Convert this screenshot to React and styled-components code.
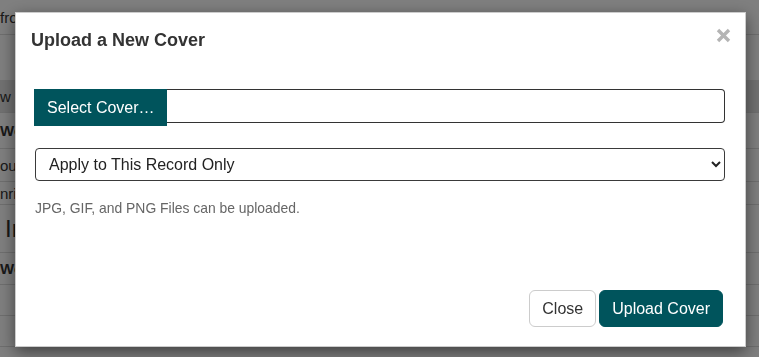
import styled, { createGlobalStyle } from "styled-components";

const GlobalStyle = createGlobalStyle`
  html, body {
    margin: 0;
    padding: 0;
    background: #fff;
    font-family: "Liberation Sans", Arial, sans-serif;
    color: #333;
    overflow: hidden;
  }
`;

const Page = styled.div`
  height: 357px;
  overflow: hidden;
`;

const PageRow = styled.div`
  height: ${(p) => p.$h}px;
  display: flex;
  align-items: center;
  padding-left: ${(p) => p.$indent || 0}px;
  border-bottom: ${(p) => (p.$line ? "1px solid #ddd" : "none")};
  background: ${(p) => p.$bg || "transparent"};
  font-size: ${(p) => p.$size || 15}px;
  font-weight: ${(p) => (p.$bold ? 700 : 400)};
  white-space: nowrap;
  box-sizing: border-box;
`;

const Backdrop = styled.div`
  position: fixed;
  inset: 0;
  background: rgba(0, 0, 0, 0.5);
`;

const Dialog = styled.div`
  margin: 12px 13px 0 15px;
  height: 335px;
  box-sizing: border-box;
  background: #fff;
  border: 1px solid rgba(0, 0, 0, 0.2);
  box-shadow: 0 5px 15px rgba(0, 0, 0, 0.5);
  display: flex;
  flex-direction: column;
`;

const Header = styled.div`
  display: flex;
  justify-content: space-between;
  align-items: flex-start;
  padding: 17px 14px 0 15px;
`;

const Title = styled.h4`
  margin: 0;
  font-size: 18px;
  line-height: 20px;
  font-weight: 700;
  color: #333;
`;

const CloseX = styled.button`
  margin-top: -2px;
  padding: 0;
  border: 0;
  background: none;
  width: 15px;
  height: 15px;
  display: flex;
  cursor: pointer;
`;

const Body = styled.div`
  padding: 39px 20px 0 19px;
  flex: 1;
`;

const InputGroup = styled.div`
  display: flex;
  align-items: flex-start;
  margin-left: -1px;
`;

const PickButton = styled.button`
  height: 37px;
  padding: 0 12px 0 13px;
  border: 0;
  background: #00545c;
  color: #fff;
  font-family: inherit;
  font-size: 16px;
  flex-shrink: 0;
`;

const FileName = styled.div`
  flex: 1;
  height: 34px;
  box-sizing: border-box;
  border: 1px solid #333;
  border-left: 0;
  border-radius: 0 4px 4px 0;
`;

const Select = styled.select`
  display: block;
  width: 100%;
  height: 33px;
  margin-top: 22px;
  padding: 0 8px 0 9px;
  box-sizing: border-box;
  border: 1px solid #3a3a3a;
  border-radius: 4px;
  background: #fff;
  color: #222;
  font-family: inherit;
  font-size: 16px;
  outline: none;
`;

const Help = styled.p`
  margin: 16.5px 0 0;
  font-size: 13.9px;
  line-height: 20px;
  color: #666;
`;

const Footer = styled.div`
  display: flex;
  justify-content: flex-end;
  gap: 3px;
  padding: 0 22px 19px 15px;
`;

const FooterButton = styled.button`
  height: 37px;
  padding: 0 12px;
  border-radius: 6px;
  border: 1px solid ${(p) => (p.$primary ? "#00545c" : "#ccc")};
  background: ${(p) => (p.$primary ? "#00545c" : "#fff")};
  color: ${(p) => (p.$primary ? "#fff" : "#333")};
  font-family: inherit;
  font-size: 16px;
  cursor: pointer;
`;

export default function App() {
  return (
    <>
      <GlobalStyle />
      <Page>
        <PageRow $h={35} $line>from</PageRow>
        <PageRow $h={45} />
        <PageRow $h={33} $bg="#e2e2e2" $line>w</PageRow>
        <PageRow $h={36} $bold $line>Work</PageRow>
        <PageRow $h={33} $line>oup</PageRow>
        <PageRow $h={23} $line>nrich</PageRow>
        <PageRow $h={48} $size={24} $indent={5} $line>Info</PageRow>
        <PageRow $h={32} $bold $line>Work</PageRow>
        <PageRow $h={31} $line />
        <PageRow $h={31} $line />
      </Page>
      <Backdrop>
        <Dialog role="dialog">
          <Header>
            <Title>Upload a New Cover</Title>
            <CloseX aria-label="Close">
              <svg width="15" height="15" viewBox="0 0 15 15">
                <path
                  d="M2 2 L13 13 M13 2 L2 13"
                  stroke="#b4b4b4"
                  strokeWidth="3.4"
                  strokeLinecap="butt"
                />
              </svg>
            </CloseX>
          </Header>
          <Body>
            <InputGroup>
              <PickButton>Select Cover…</PickButton>
              <FileName />
            </InputGroup>
            <Select defaultValue="record">
              <option value="record">Apply to This Record Only</option>
              <option value="all">Apply to All Records</option>
            </Select>
            <Help>JPG, GIF, and PNG Files can be uploaded.</Help>
          </Body>
          <Footer>
            <FooterButton>Close</FooterButton>
            <FooterButton $primary>Upload Cover</FooterButton>
          </Footer>
        </Dialog>
      </Backdrop>
    </>
  );
}
